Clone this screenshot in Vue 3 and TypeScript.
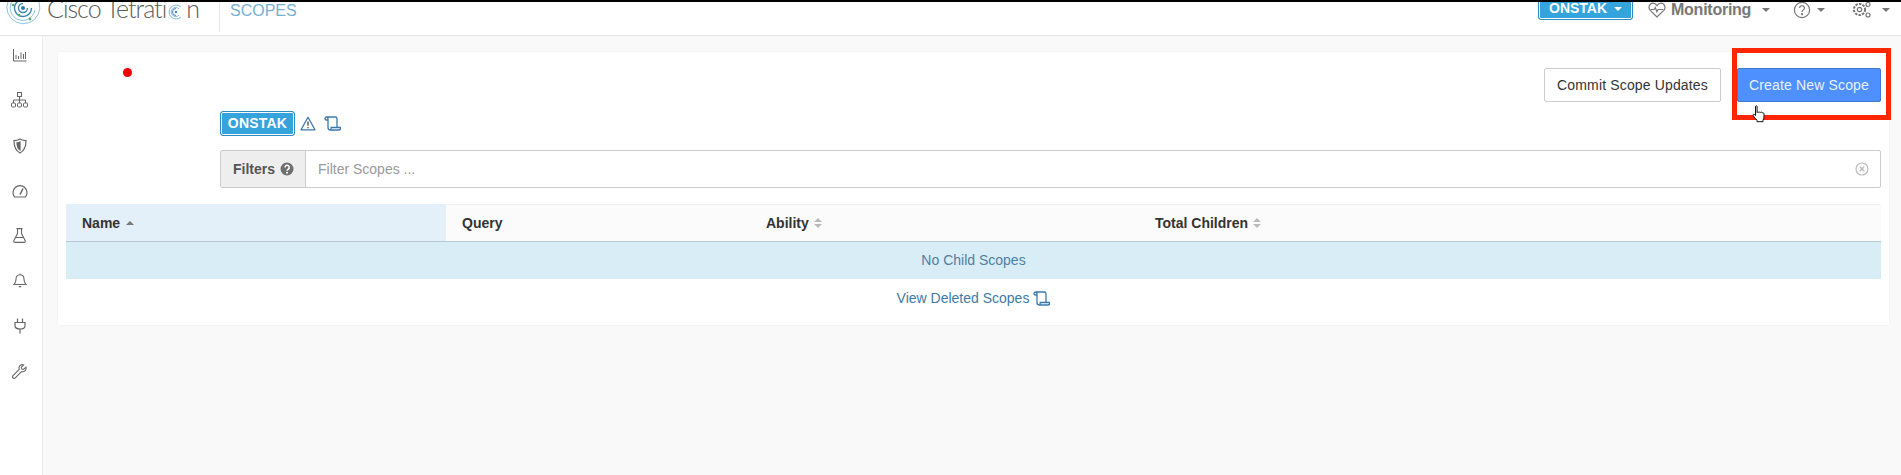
<script setup lang="ts">
const columns = [
  { label: 'Query', width: 304, sort: false },
  { label: 'Ability', width: 389, sort: true },
  { label: 'Total Children', width: 676, sort: true },
]
</script>

<template>
  <div class="app">
    <header class="topbar">
      <div class="brand">
        <svg class="radar" viewBox="0 0 36 36" width="36" height="36" fill="none">
          <g stroke="#8cc4e0" stroke-width="1">
            <path d="M34 12A16.500 16.500 0 1 1 12 2" />
            <path d="M30 20A12.500 12.500 0 1 1 10 8" />
            <path d="M26.500 18A8.500 8.500 0 1 1 14 10.500" stroke="#3f86b3" stroke-width="1.400" />
            <path d="M22.500 18A4.500 4.500 0 1 1 18 13.500" stroke="#3f86b3" stroke-width="1.400" />
          </g>
          <circle cx="18" cy="18" r="2" fill="#2f76a8" />
          <circle cx="8" cy="15" r="1.300" fill="#5cab6a" />
          <circle cx="14" cy="25" r="1.300" fill="#5cab6a" />
          <circle cx="25" cy="29" r="1.400" fill="#5cab6a" />
        </svg>
        <span class="wordmark">Cisco Tetrati<svg class="mark-o" viewBox="0 0 16 16" width="16" height="16" fill="none" stroke="#7db8d8" stroke-width="1">
          <path d="M13 3A7 7 0 1 0 13 13M11 5A4.500 4.500 0 1 0 11 11" />
          <path d="M8 4.500A3.500 3.500 0 1 0 8 11.500" stroke="#3f86b3" />
          <circle cx="8" cy="8" r="1.200" fill="#3f86b3" stroke="none" />
        </svg>n</span>
      </div>
      <div class="section-title">SCOPES</div>
      <nav class="top-actions">
        <button class="scope-pill">ONSTAK <i class="caret caret-white"></i></button>
        <span class="nav-item monitoring">
          <svg viewBox="0 0 18 16" width="18" height="16" fill="none" stroke="#777" stroke-width="1.200">
            <path d="M9 15 2.200 8.400C-.2 5.800 1.400 1.200 5 1.200c1.800 0 3 1 4 2.400 1-1.400 2.200-2.400 4-2.400 3.600 0 5.200 4.600 2.800 7.200Z" />
            <path d="M2.500 7.500h3.500l1.300-2 1.600 4.200 1.200-2.200h5" />
          </svg>
          <b>Monitoring</b><i class="caret"></i>
        </span>
        <span class="nav-item help">
          <svg viewBox="0 0 18 18" width="18" height="18" fill="none" stroke="#777" stroke-width="1.200">
            <circle cx="9" cy="9" r="7.600" />
            <path d="M6.600 7a2.400 2.400 0 1 1 3.600 2.100c-.8.500-1.200.9-1.200 1.800" />
            <circle cx="9" cy="13.200" r=".5" fill="#777" />
          </svg>
          <i class="caret"></i>
        </span>
        <span class="nav-item settings">
          <svg viewBox="0 0 20 18" width="20" height="18" fill="none" stroke="#777" stroke-width="1.200">
            <circle cx="7.500" cy="8.500" r="5.600" stroke-dasharray="2.400 1.200" stroke-width="2" />
            <circle cx="7.500" cy="8.500" r="2.200" />
            <circle cx="16" cy="3.500" r="2" />
            <circle cx="16" cy="14" r="2" />
          </svg>
          <i class="caret"></i>
        </span>
      </nav>
    </header>

    <div class="layout">
      <aside class="sidebar">
        <svg viewBox="0 0 14 14" width="14" height="14" fill="none" stroke="#666" stroke-width="1">
          <path d="M.5 1v12h13M3 11V7M5.500 11V8M8 11V4.500M10.500 11V6M12.500 11V4" />
        </svg>
        <svg viewBox="0 0 17 16" width="17" height="16" fill="none" stroke="#666" stroke-width="1">
          <rect x="6.500" y=".5" width="4" height="4" />
          <path d="M8.500 4.500V8M2.500 11V8h12v3M8.500 8v3" />
          <rect x=".5" y="11" width="4" height="4" rx="1" />
          <rect x="6.500" y="11" width="4" height="4" rx="1" />
          <rect x="12.500" y="11" width="4" height="4" rx="1" />
        </svg>
        <svg viewBox="0 0 14 16" width="14" height="16" fill="none" stroke="#666" stroke-width="1.200">
          <path d="M7 1c2 1.200 3.800 1.600 6 1.600 0 6-1.600 10.200-6 12.400C2.600 12.800 1 8.600 1 2.600 3.200 2.600 5 2.200 7 1Z" />
          <path d="M7 4C6 4.600 5 4.800 4 4.900c.1 3.200.9 5.500 3 7Z" fill="#666" />
        </svg>
        <svg viewBox="0 0 16 14" width="16" height="14" fill="none" stroke="#666" stroke-width="1.200">
          <path d="M2.600 13a7 7 0 1 1 10.800 0Z" />
          <path d="M8 10.500 11 4.500" stroke-width="1.600" />
        </svg>
        <svg viewBox="0 0 13 15" width="13" height="15" fill="none" stroke="#666" stroke-width="1.100">
          <path d="M3.500.6h6M4.500.6v5L.9 12.600c-.4 1 .1 1.800 1.100 1.800h9c1 0 1.500-.8 1.100-1.800L8.500 5.600v-5M3 9.500h7" />
        </svg>
        <svg viewBox="0 0 14 15" width="14" height="15" fill="none" stroke="#666" stroke-width="1.100">
          <path d="M7 1.800c-2.800 0-4 2-4 4.400 0 2.500-.6 3.800-2 5.300h12c-1.400-1.500-2-2.800-2-5.300 0-2.400-1.200-4.400-4-4.400ZM7 .5v1.300M5.800 13.600h2.400" />
        </svg>
        <svg viewBox="0 0 12 16" width="12" height="16" fill="none" stroke="#666" stroke-width="1.200">
          <path d="M3.500.5v4M8.500.5v4M1 4.500h10v3.200c0 2-2 3.300-5 3.300s-5-1.300-5-3.300ZM6 11v4.500" />
        </svg>
        <svg viewBox="0 0 15 15" width="15" height="15" fill="none" stroke="#666" stroke-width="1.100">
          <path d="M14 3.200 11.600 5.400 9.800 5 9.400 3.200 11.700.9c-2-.7-4.200.4-4.600 2.500-.1.700 0 1.300.2 1.900L1 11.600c-.7.800-.6 1.700 0 2.300s1.600.6 2.300 0l6.200-6.300c2.800.9 5.200-1.500 4.500-4.400Z" />
        </svg>
      </aside>

      <main class="content">
        <section class="card">
          <span class="status-dot"></span>
          <div class="actions">
            <button class="btn btn-default">Commit Scope Updates</button>
            <button class="btn btn-primary">Create New Scope</button>
          </div>
          <span class="highlight"></span>
          <svg class="cursor" viewBox="0 0 14 18" width="14" height="18">
            <path d="M3.500 1.500c0-1 1.600-1 1.600 0v6c.4-.8 1.600-.8 1.800 0 .4-.8 1.600-.7 1.800.1.500-.7 1.700-.5 1.800.4.400-.3 1.500-.2 1.500 1v3c0 1.500-.6 2.200-1 3.200v1.500H5v-1.500C3.800 14 2.500 12.600 1.200 10.800c-.8-1.100.5-2.200 1.400-1.300l.9 1Z" fill="#fff" stroke="#111" stroke-width="1" />
          </svg>

          <div class="crumb">
            <span class="scope-tag">ONSTAK</span>
            <svg viewBox="0 0 16 15" width="16" height="15" fill="none" stroke="#3a78ae" stroke-width="1.300">
              <path d="M8 1.200 15 13.800H1Z" stroke-linejoin="round" />
              <path d="M8 5.500v4.200M8 10.900v1.300" stroke="#555" stroke-width="1.400" />
            </svg>
            <svg class="scroll" viewBox="0 0 17 15" width="17" height="15" fill="none" stroke="#3a78ae" stroke-width="1.300">
              <path d="M1 2.800c0-1 .7-1.800 1.700-1.800h8.500c1 0 1.800.8 1.800 1.800v8M1 2.800c0 .7.700 1.200 1.500 1.200H4M2.700 1c1 0 1.300 1 1.300 2v8.500c0 1.500 1 2.500 2.400 2.500h8.400c1.200 0 1.900-1 1.900-2.500H7.200c0 1.500-.3 2.500-.8 2.500" />
            </svg>
          </div>

          <div class="filter">
            <div class="filter-addon">
              <b>Filters</b>
              <svg viewBox="0 0 14 14" width="14" height="14">
                <circle cx="7" cy="7" r="6.500" fill="#6f6f6f" />
                <path d="M5 5.400A2.100 2.100 0 1 1 8 7.300c-.7.400-1 .7-1 1.400" fill="none" stroke="#fff" stroke-width="1.500" />
                <circle cx="7" cy="10.700" r="1" fill="#fff" />
              </svg>
            </div>
            <div class="filter-input">
              <span>Filter Scopes ...</span>
              <svg viewBox="0 0 14 14" width="14" height="14" fill="none" stroke="#bbb" stroke-width="1.200">
                <circle cx="7" cy="7" r="6" />
                <path d="M4.800 4.800l4.400 4.400M9.200 4.800l-4.400 4.400" stroke-width="1.400" />
              </svg>
            </div>
          </div>

          <div class="table">
            <div class="thead">
              <div class="th th-active">Name <i class="sort-up"></i></div>
              <div v-for="c in columns" :key="c.label" class="th" :style="{ width: c.width + 'px' }">
                {{ c.label }}
                <span v-if="c.sort" class="sort-both"><i></i><i></i></span>
              </div>
            </div>
            <div class="empty-row">No Child Scopes</div>
          </div>

          <div class="deleted">
            <span>View Deleted Scopes</span>
            <svg viewBox="0 0 17 15" width="17" height="15" fill="none" stroke="#3a78ae" stroke-width="1.300">
              <path d="M1 2.800c0-1 .7-1.800 1.700-1.800h8.500c1 0 1.800.8 1.800 1.800v8M1 2.800c0 .7.700 1.200 1.500 1.200H4M2.700 1c1 0 1.300 1 1.300 2v8.500c0 1.500 1 2.500 2.400 2.500h8.400c1.200 0 1.900-1 1.900-2.500H7.200c0 1.500-.3 2.500-.8 2.500" />
            </svg>
          </div>
        </section>
      </main>
    </div>
  </div>
</template>

<style>
html, body { margin: 0; background: #f9f9f9; }
</style>

<style scoped>
.app {
  width: 1901px;
  height: 475px;
  overflow: hidden;
  display: flex;
  flex-direction: column;
  font-family: "Liberation Sans", Arial, sans-serif;
  font-size: 14px;
  color: #333;
}
.topbar {
  height: 33px;
  flex: none;
  display: flex;
  align-items: flex-start;
  background: #fff;
  border-top: 2px solid #000;
  border-bottom: 1px solid #e4e4e4;
  overflow: hidden;
}
.brand {
  width: 220px;
  height: 30px;
  flex: none;
  box-sizing: border-box;
  padding-left: 5px;
  display: flex;
  gap: 6px;
  border-right: 1px solid #e7e7e7;
  overflow: hidden;
}
.radar { margin-top: -12px; flex: none; }
.wordmark {
  font-family: Lato, sans-serif;
  font-weight: 300;
  font-size: 25px;
  line-height: 30px;
  margin-top: -9px;
  letter-spacing: -1px;
  color: #5c5c5c;
  white-space: nowrap;
}
.mark-o { margin: 0 2px -2px 2px; }
.section-title {
  margin: 0 0 0 10px;
  font-size: 16px;
  line-height: 18px;
  color: #76b0d4;
}
.top-actions { margin-left: auto; display: flex; align-items: flex-start; }
.scope-pill {
  width: 95px;
  height: 22px;
  margin-top: -4px;
  padding: 0 0 2px;
  background: #35a3dc;
  color: #fff;
  border: 1px solid #2d8dc0;
  border-radius: 3px;
  font: bold 14px "Liberation Sans", sans-serif;
  box-shadow: inset 0 0 0 1px #fff;
}
.nav-item { display: flex; align-items: center; height: 16px; color: #777; font-size: 16px; }
.monitoring { margin-left: 15px; width: 145px; }
.monitoring b { margin-left: 5px; letter-spacing: -.25px; }
.monitoring .caret { margin-left: 11px; }
.help { width: 59px; }
.help .caret { margin-left: 6px; }
.settings { width: 49px; }
.settings .caret { margin-left: 10px; }
.caret {
  display: inline-block;
  border-top: 4px solid #777;
  border-left: 4px solid transparent;
  border-right: 4px solid transparent;
  vertical-align: middle;
}
.caret-white { border-top-color: #fff; margin-left: 3px; }

.layout { flex: 1; display: flex; min-height: 0; }
.sidebar {
  width: 43px;
  flex: none;
  box-sizing: border-box;
  background: #fff;
  border-right: 1px solid #ececec;
  display: flex;
  flex-direction: column;
  align-items: center;
  padding: 12px 3px 0 0;
  gap: 30px;
}
.content { flex: 1; padding: 16px 12px 0 15px; background: #f9f9f9; }
.card {
  position: relative;
  height: 273px;
  box-sizing: border-box;
  background: #fff;
  padding: 16px 8px 0;
  box-shadow: 0 0 2px rgba(0, 0, 0, .05);
}
.status-dot {
  position: absolute;
  left: 65px;
  top: 16px;
  width: 9px;
  height: 9px;
  border-radius: 50%;
  background: #f00000;
}
.actions { display: flex; justify-content: flex-end; gap: 16px; }
.btn {
  height: 34px;
  box-sizing: border-box;
  border-radius: 2px;
  font: 14px "Liberation Sans", sans-serif;
  letter-spacing: .15px;
}
.btn-default { width: 177px; background: #fff; border: 1px solid #ccc; color: #333; }
.btn-primary { width: 144px; background: #4d90fe; border: 1px solid #3f79d6; color: #eaf2ff; }
.highlight {
  position: absolute;
  left: 1674px;
  top: -4px;
  width: 159px;
  height: 72px;
  box-sizing: border-box;
  border: 5px solid #ff2600;
  pointer-events: none;
}
.cursor { position: absolute; left: 1694px; top: 53px; }

.crumb {
  display: flex;
  align-items: center;
  gap: 5px;
  margin: 9px 0 0 154px;
  height: 25px;
}
.scope-tag {
  width: 75px;
  height: 25px;
  box-sizing: border-box;
  text-align: center;
  line-height: 22px;
  font-weight: bold;
  font-size: 14px;
  letter-spacing: .2px;
  color: #fff;
  background: #35a3dc;
  border: 1px solid #2d8dc0;
  border-radius: 3px;
  box-shadow: inset 0 0 0 1px #fff;
}
.scroll { margin-left: 3px; }

.filter {
  display: flex;
  height: 38px;
  margin: 14px 0 0 154px;
  box-sizing: border-box;
  border: 1px solid #ccc;
  border-radius: 2px;
}
.filter-addon {
  width: 85px;
  box-sizing: border-box;
  background: #eee;
  border-right: 1px solid #ccc;
  display: flex;
  align-items: center;
  gap: 5px;
  padding-left: 12px;
  color: #555;
}
.filter-input {
  flex: 1;
  display: flex;
  align-items: center;
  justify-content: space-between;
  padding: 0 11px 0 12px;
  color: #999;
}
.table { margin-top: 16px; }
.thead {
  display: flex;
  height: 38px;
  background: #fbfbfb;
  border-top: 1px solid #f0f0f0;
  border-bottom: 1px solid #b9c9d2;
  box-sizing: border-box;
}
.th {
  box-sizing: border-box;
  padding: 0 16px;
  display: flex;
  align-items: center;
  font-weight: bold;
  color: #333;
  white-space: pre;
}
.th-active { width: 380px; background: #e3f0f9; margin-top: -1px; }
.sort-up {
  flex: none;
  width: 0;
  height: 0;
  margin-left: 2px;
  border-bottom: 4px solid #777;
  border-left: 4px solid transparent;
  border-right: 4px solid transparent;
}
.sort-both { flex: none; display: inline-flex; flex-direction: column; gap: 2px; margin-left: 1px; }
.sort-both i {
  display: block;
  width: 0;
  height: 0;
  border-left: 4px solid transparent;
  border-right: 4px solid transparent;
  border-bottom: 4px solid #bbb;
}
.sort-both i + i { border-bottom: 0; border-top: 4px solid #bbb; }
.empty-row {
  height: 37px;
  line-height: 37px;
  text-align: center;
  background: #d9edf7;
  color: #4f7f9f;
}
.deleted {
  margin-top: 11px;
  display: flex;
  justify-content: center;
  align-items: center;
  gap: 4px;
  color: #3d7aa8;
}
</style>
